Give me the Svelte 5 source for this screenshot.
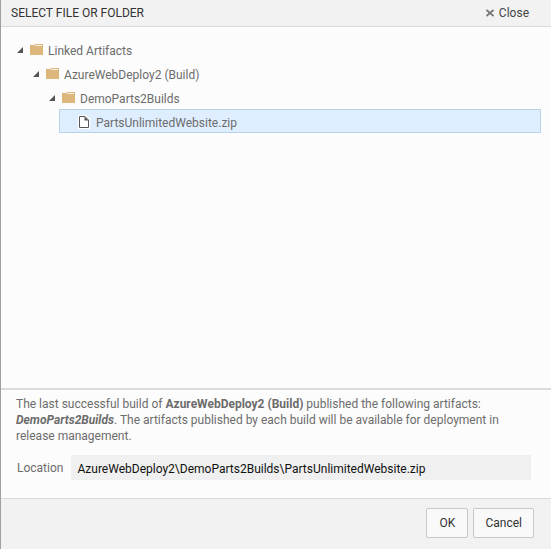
<script lang="ts">
	type TreeNode = {
		name: string;
		level: number;
		kind: 'folder' | 'file';
	};

	const nodes: TreeNode[] = [
		{ name: 'Linked Artifacts', level: 0, kind: 'folder' },
		{ name: 'AzureWebDeploy2 (Build)', level: 1, kind: 'folder' },
		{ name: 'DemoParts2Builds', level: 2, kind: 'folder' },
		{ name: 'PartsUnlimitedWebsite.zip', level: 3, kind: 'file' },
	];

	let selected = $state('PartsUnlimitedWebsite.zip');
	let location = $state('AzureWebDeploy2\\DemoParts2Builds\\PartsUnlimitedWebsite.zip');
</script>

<div class="dialog" role="dialog" aria-labelledby="dialog-title">
	<header class="title-bar">
		<h1 id="dialog-title">SELECT FILE OR FOLDER</h1>
		<button class="close" type="button">
			<svg width="8" height="8" viewBox="0 0 8 8" aria-hidden="true">
				<path d="M0.5 1L7.5 7M7.5 1L0.5 7" stroke="#777" stroke-width="1.8" />
			</svg>
			Close
		</button>
	</header>

	<div class="tree" role="tree">
		{#each nodes as node}
			<div class="level" style:padding-left="{node.level * 16}px">
				<button
					class="node"
					class:selected={node.name === selected}
					type="button"
					role="treeitem"
					aria-selected={node.name === selected}
					onclick={() => (selected = node.name)}
				>
					{#if node.kind === 'folder'}
						<svg class="arrow" width="6" height="6" viewBox="0 0 6 6" aria-hidden="true">
							<path d="M6 0V6H0Z" fill="#555" />
						</svg>
						<svg class="icon" width="13" height="12" viewBox="0 0 13 12" aria-hidden="true">
							<path d="M0 1H4L5 0H13V11H0Z" fill="#dcb67a" />
							<path d="M4.6 2L5.4 1H12V2Z" fill="#fcf5e8" />
						</svg>
					{:else}
						<span class="arrow"></span>
						<svg class="icon" width="13" height="14" viewBox="0 0 13 14" aria-hidden="true">
							<path d="M0 0H8L12 4V14H0Z" fill="#fff" />
							<path d="M1.5 1.5H7L10.5 5V12.5H1.5Z" fill="#fff" stroke="#555" />
							<path d="M6.5 1.5V5.5H10.5Z" fill="#555" />
						</svg>
					{/if}
					<span class="name">{node.name}</span>
				</button>
			</div>
		{/each}
	</div>

	<section class="details">
		<p>
			The last successful build of <strong>AzureWebDeploy2 (Build)</strong> published the following artifacts:
			<strong><em>DemoParts2Builds</em></strong>. The artifacts published by each build will be available for
			deployment in release management.
		</p>
		<div class="field">
			<label for="location">Location</label>
			<input id="location" type="text" bind:value={location} />
		</div>
	</section>

	<footer class="actions">
		<button type="button">OK</button>
		<button type="button">Cancel</button>
	</footer>
</div>

<style>
	:global(body) {
		margin: 0;
	}

	.dialog {
		box-sizing: border-box;
		display: flex;
		flex-direction: column;
		min-height: 100vh;
		border-left: 1px solid #a0a0a0;
		background: #fcfcfc;
		color: #6c6c6c;
		font: 12px/16px 'Segoe UI', Roboto, sans-serif;
	}

	button,
	input {
		box-sizing: border-box;
		margin: 0;
		font: inherit;
	}

	.title-bar {
		display: flex;
		align-items: center;
		justify-content: space-between;
		height: 26px;
		padding: 0 22px 0 10px;
		border-bottom: 1px solid #dadada;
		background: #f2f2f2;
		color: #333;
	}

	h1 {
		margin: 0;
		font-size: 12px;
		font-weight: 400;
	}

	.close {
		display: flex;
		align-items: center;
		gap: 5px;
		padding: 0;
		border: 0;
		background: none;
		color: #444;
	}

	.tree {
		flex: 1;
		padding: 10px 10px 12px 10px;
	}

	.node {
		display: flex;
		align-items: center;
		width: 100%;
		height: 24px;
		padding: 2px 0 0 5px;
		border: 1px solid transparent;
		background: none;
		color: inherit;
		text-align: left;
		white-space: nowrap;
	}

	.node.selected {
		border-color: #b8d3e8;
		background: #dfeeff;
	}

	.arrow {
		width: 6px;
		margin-right: 7px;
	}

	.icon {
		margin-right: 5px;
	}

	.name {
		padding-top: 2px;
	}

	.details {
		padding: 6px 20px 18px 15px;
		border-top: 2px solid #dcdcdc;
	}

	p {
		margin: 0 0 11px;
	}

	.field {
		display: flex;
		align-items: center;
		gap: 8px;
		padding-left: 1px;
	}

	.field input {
		flex: 1;
		min-width: 0;
		height: 25px;
		padding: 2px 6px 0;
		border: 0;
		background: #f0f0f0;
		color: #111;
	}

	.actions {
		display: flex;
		justify-content: flex-end;
		gap: 5px;
		padding: 9px 17px 11px;
		border-top: 1px solid #dadada;
		background: #f2f2f2;
	}

	.actions button {
		min-width: 42px;
		height: 30px;
		padding: 0 11px;
		border: 1px solid #c8c8c8;
		border-radius: 2px;
		background: #f9f9f9;
		color: #333;
	}
</style>
